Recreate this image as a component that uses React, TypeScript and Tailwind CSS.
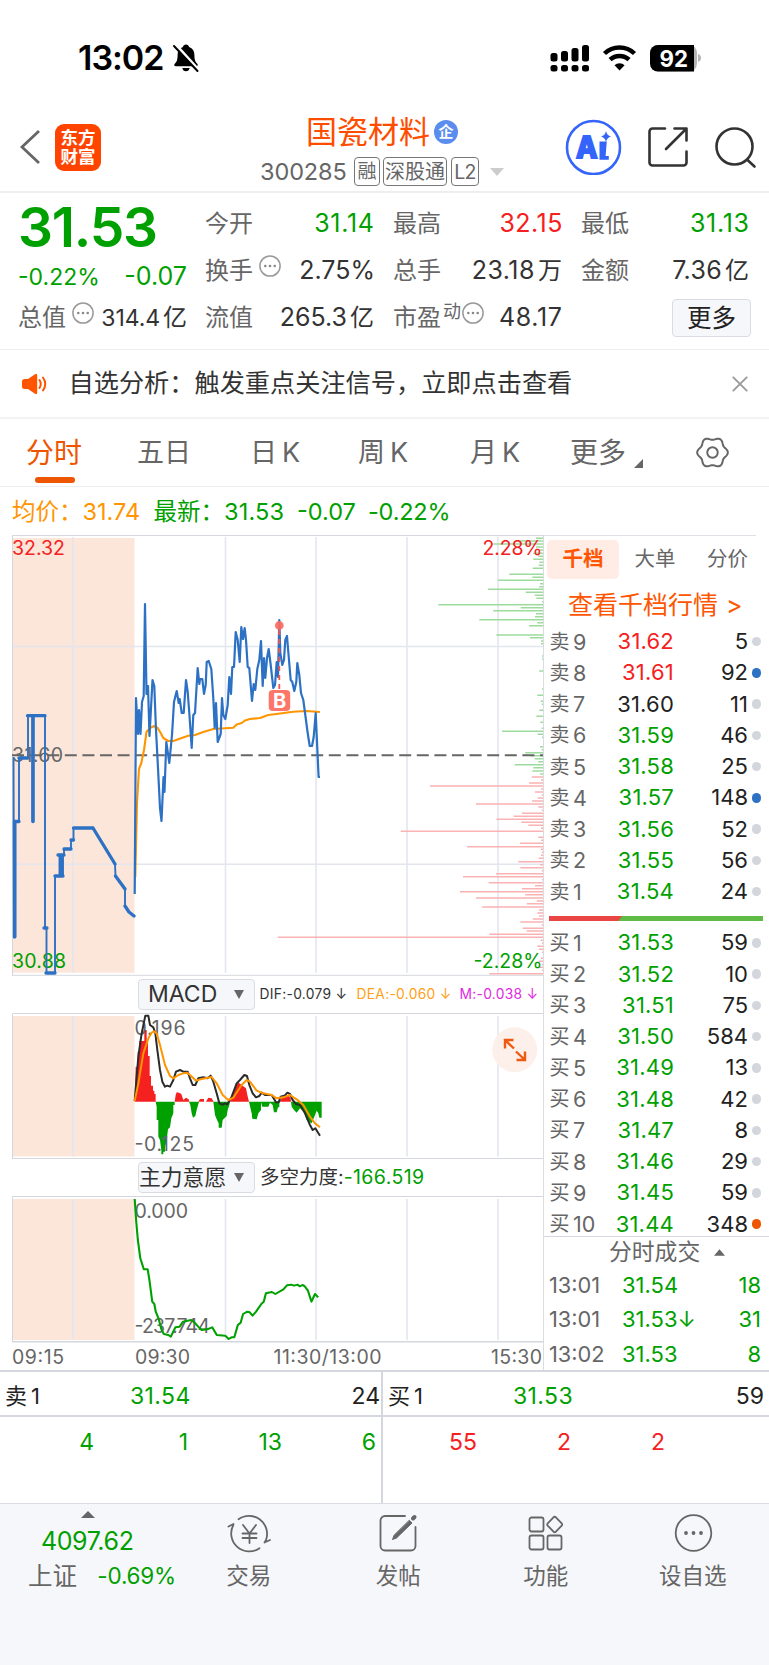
import React from "react";

const GREEN = "#00a000";
const RED = "#f52020";
const BLUE = "#2d71c4";
const GRID = "#e3e6ee";
const LINE = "#d4d7dd";

const auction =
  "13.5,757 14,937 15.5,937 15.5,821.5 19,821.5 19,758 28,758 28,716 32.3,716 32.3,821.5 33.5,821.5 33.5,716 45,716 45,928 46.5,928 46.5,973 55,973 55,876 59.5,876 59.5,855 61.5,855 61.5,876 63,876 63,855 64,855 64,849 71,849 71,840 73.5,840 73.5,828 93,828 115,864 115.5,876 125,889 125,906 129,912 134,916";

const price =
  "134.7,894 136,698 138,734 139,710 140.5,734 142,702 143.7,696 145,604 146.5,694 148,686 149.5,736 152.5,680 154.3,686 156,730 158,768 160,808 161.5,821 163.5,777 164.5,792 166.3,742 169.3,763 172,735 174,702 176.7,691 178.7,703 179.7,699 181.7,713 183.7,713 186,680 187.7,692 189.3,713 191.7,748 193.3,715 195,713 197.7,668 199.3,684 200,679 202.3,679 204,694 205.7,685 206.7,662 208.7,661 211.3,669 213.3,698 214.7,728 216,703 217.7,742 220.7,734 222,698 223.3,715 225.3,719 227.7,705 229.3,677 231,694 232.3,667 234,667 235.7,632 237.7,640 239.7,662 241.3,627 243,639 244.7,628 246,640 247.7,667 249.3,668 252,701 253.7,684 255.3,690 257.3,669 259.3,660 261,641 262.7,686 264,658 265.3,678 267,658 268.7,649 270.7,665 273.3,688 275,685 276.7,662 278,677 279.3,620 280.3,653 282.3,665 284,660 285.3,640 287,636 288.3,652 290.7,680 292.3,682 294.3,691 296.3,682 297.3,663 299.3,675 301,693 303.3,700 305.3,715 307.7,733 309.7,746 312,746 313.7,737 315.7,713 318.6,777 320,777";

const average =
  "135.3,877 137,803 139,769 141.3,763 144,750 146.5,732 150,728 154.3,726 157.7,728 160.7,733 163.3,738 168.3,741 173.3,741 181.7,738 188.3,735.7 195,735 203.3,732 213.3,729 233.3,727.7 236.7,724.5 241.7,723 245,720.5 250,719 260,718 268.3,715 278.3,713.7 293.3,711.7 306.7,711 320,712";

// Volume-by-price rows: [row, left edge] in thirds of a pixel from (260, 525).
const sellDepth: number[][] = [
  [40, 828], [48, 775], [57, 700], [66, 828], [75, 838], [85, 820], [94, 835], [103, 820], [112, 838], [121, 836],
  [130, 818], [148, 748], [157, 817], [166, 714], [176, 840], [185, 838], [193, 684], [202, 797], [211, 824],
  [220, 829], [230, 846], [239, 535], [248, 782], [257, 700], [266, 828], [275, 825], [284, 658], [293, 832],
  [302, 807], [330, 709], [338, 810], [348, 843], [356, 843], [393, 846], [402, 846], [438, 838], [492, 846],
  [511, 832], [529, 842], [538, 845], [556, 838], [574, 829], [592, 841], [610, 845], [619, 726], [628, 833],
  [637, 846], [665, 840], [674, 845], [683, 796], [692, 813], [701, 824], [710, 835], [719, 764], [728, 820],
  [738, 817], [747, 840],
];
const buyDepth: number[][] = [
  [756, 815], [765, 843], [774, 807], [783, 510], [792, 843], [801, 825], [810, 845], [819, 833], [828, 816],
  [837, 648], [846, 835], [856, 845], [865, 786], [874, 761], [883, 709], [892, 784], [901, 805], [910, 843],
  [919, 422], [937, 835], [946, 843], [955, 780], [965, 621], [973, 842], [982, 846], [991, 843], [1000, 836],
  [1010, 775], [1019, 840], [1028, 781], [1037, 845], [1046, 708], [1055, 609], [1064, 846], [1073, 686],
  [1082, 825], [1091, 786], [1100, 600], [1109, 796], [1119, 648], [1128, 830], [1136, 800], [1146, 667],
  [1155, 837], [1164, 832], [1173, 837], [1182, 818], [1191, 781], [1200, 845], [1210, 788], [1218, 800],
  [1228, 688], [1237, 53], [1246, 842], [1255, 846], [1264, 832], [1273, 837], [1282, 846], [1300, 843],
  [1309, 836], [1318, 845], [1327, 838], [1336, 846], [1346, 688],
];

function depthPath(rows: number[][]) {
  return rows.map(([y, x]) => `M${(260 + x / 3).toFixed(1)} ${(525 + y / 3).toFixed(1)}H543.3`).join("");
}

const dif =
  "404,393 415,260 425,190 436,137 445,137 450,165 460,172 466,190 472,240 480,300 487,335 495,350 502,347 510,350 520,330 528,305 540,300 550,305 563,305 570,325 578,345 586,345 595,325 610,322 622,325 632,317 640,335 650,370 658,400 668,404 675,400 682,403 695,380 710,340 720,330 733,315 741,318 748,345 758,370 768,382 778,378 785,368 795,375 815,375 828,397 836,397 842,380 855,376 862,368 870,372 878,390 888,402 900,405 915,430 930,465 938,480 946,475 960,497";
const dea =
  "404,393 415,340 430,250 445,205 455,188 462,184 470,190 480,225 495,285 510,318 520,325 535,315 550,310 562,308 570,315 588,332 605,327 635,321 650,340 668,375 685,390 700,383 725,345 740,330 750,335 770,362 790,370 815,375 830,385 850,382 870,375 890,388 910,405 930,440 945,460 960,472";
const histRed = [
  "404,395 407,290 413,290 413,245 418,245 418,213 433,213 433,180 440,180 440,215 444,215 444,258 449,258 449,318 453,318 453,347 459,347 459,362 463,362 463,372 467,372 467,395",
  "524,395 527,375 530,367 537,368 544,372 550,390 558,383 566,388 568,395",
  "595,395 600,387 612,387 612,395",
  "618,395 625,383 635,385 641,395",
  "690,395 700,370 712,335 725,345 738,355 742,375 747,395",
  "838,395 845,385 855,380 865,375 872,385 873,395",
];
const histGreen = [
  "467,395 470,410 470,450 475,450 475,500 480,510 484,540 484,553 490,553 490,545 495,545 495,530 500,512 504,478 510,472 514,445 520,430 520,405 524,405 524,395",
  "567,395 571,405 575,430 579,443 586,438 590,420 597,395",
  "640,395 645,435 651,450 656,460 656,473 665,473 668,450 680,438 683,420 688,405 690,395",
  "747,395 755,430 757,446 770,448 775,430 783,420 783,397 787,410 805,410 810,398 818,405 822,427 830,427 834,412 838,412 838,395",
  "873,395 875,410 882,420 890,428 900,415 912,425 920,450 935,460 943,440 950,422 955,430 958,443 965,443 965,395",
];
const strength =
  "384,117 388,180 393,240 400,295 410,328 421,328 426,360 434,425 440,432 444,455 452,475 460,508 467,522 480,525 487,530 494,515 500,502 512,500 522,485 545,480 555,488 565,500 575,510 590,508 605,502 618,525 642,527 652,537 660,532 668,532 678,495 686,488 693,462 705,455 712,457 720,467 730,455 745,432 752,425 758,400 775,396 785,402 808,388 818,376 830,374 838,377 848,374 855,379 862,375 868,378 878,392 888,425 898,402 907,412";

const gear =
  Array.from({ length: 72 }, (_, i) => {
    const a = (i * Math.PI) / 36;
    const r = 13.6 + 1.3 * Math.cos(6 * a);
    return `${i ? "L" : "M"}${(17 + r * Math.cos(a)).toFixed(2)} ${(17 + r * Math.sin(a)).toFixed(2)}`;
  }).join("") + "z";

function Label(p: { x: number; y: number; w: number; fill: string; children: React.ReactNode }) {
  return (
    <text x={p.x} y={p.y} fill={p.fill} fontSize={19.5} textLength={p.w}>
      {p.children}
    </text>
  );
}

function Verticals({ top, bottom }: { top: number; bottom: number }) {
  return (
    <path
      d={[73, 225.5, 316, 407, 498].map((x) => `M${x} ${top}V${bottom}`).join("")}
      stroke={GRID}
      strokeWidth="1.6"
      fill="none"
    />
  );
}

function More({ className }: { className?: string }) {
  return (
    <svg viewBox="0 0 24 24" className={`size-6 shrink-0 ${className ?? ""}`}>
      <circle cx="12" cy="12" r="10.1" fill="none" stroke="#999" strokeWidth="1.5" />
      <g fill="#888">
        <circle cx="7.3" cy="12" r="1.3" />
        <circle cx="12" cy="12" r="1.3" />
        <circle cx="16.7" cy="12" r="1.3" />
      </g>
    </svg>
  );
}

function StatusBar() {
  return (
    <div className="flex h-[98px] items-center pl-[78px] pt-[17px]">
      <span className="w-[88px] text-[34px] font-semibold tracking-[-1px] text-black">13:02</span>
      <svg viewBox="0 0 28 30" className="ml-[6px] h-[30px] w-[28px]">
        <path d="M14 1.5c1.6 0 2.8 1 3.1 2.4 3.6 1.3 5.3 4.3 5.3 8 0 5.5 1.3 7.3 2.9 8.9.9 1 .3 2.5-1 2.5H3.7c-1.3 0-1.9-1.500-1-2.500 1.600-1.600 2.900-3.400 2.900-8.900 0-3.700 1.700-6.700 5.300-8C11.200 2.500 12.400 1.500 14 1.500z" fill="#000" />
        <path d="M10.3 25h7.4c-.4 2-1.8 3.300-3.700 3.300s-3.300-1.300-3.700-3.300z" fill="#000" />
        <path d="M3.800 1.800 27 27.500" stroke="#fff" strokeWidth="3" />
        <path d="M2 3 25.500 28" stroke="#000" strokeWidth="2" strokeLinecap="round" />
      </svg>
      <svg viewBox="0 0 160 30" className="ml-[349px] h-[30px] w-[160px]">
        <g fill="#000">
          <rect x="1.5" y="10" width="7" height="8.5" rx="2.5" />
          <rect x="12" y="8" width="7" height="10.5" rx="2.5" />
          <rect x="22.5" y="5" width="7" height="13.5" rx="2.5" />
          <rect x="33" y="2" width="7" height="16.5" rx="2.5" />
          <rect x="1.5" y="22" width="7" height="6.5" rx="2.5" />
          <rect x="12" y="22" width="7" height="6.5" rx="2.5" />
          <rect x="22.5" y="22" width="7" height="6.5" rx="2.5" />
          <rect x="33" y="22" width="7" height="6.5" rx="2.5" />
        </g>
        <g fill="none" stroke="#000" strokeWidth="4.5">
          <path d="M55.500 10.500a21.500 21.500 0 0 1 30 0" />
          <path d="M61.100 16.700a13.700 13.700 0 0 1 18.900 0" />
        </g>
        <path d="M65.500 22.200a7.300 7.300 0 0 1 10.100 0l-5.050 5.300z" fill="#000" />
        <path d="M149 11c2 .6 3 2.200 3 4s-1 3.400-3 4z" fill="#b5b5b5" />
        <rect x="101" y="2" width="47" height="26.5" rx="8" fill="#b5b5b5" />
        <path d="M109 2h36v26.500h-36a8 8 0 0 1-8-8V10a8 8 0 0 1 8-8z" fill="#000" />
        <text x="110.500" y="23.500" fill="#fff" fontSize="23" fontWeight="700" textLength="28.500" lengthAdjust="spacingAndGlyphs">92</text>
      </svg>
    </div>
  );
}

function Header() {
  return (
    <header className="flex h-[95px] items-center border-b-2 border-[#eeeeee]">
      <svg viewBox="0 0 22 36" className="ml-[19px] mt-[5px] h-[36px] w-[22px]">
        <path d="M20 2 3 18l17 16" fill="none" stroke="#666" strokeWidth="2.8" />
      </svg>
      <div className="ml-[14px] mt-[5px] grid h-[47px] w-[46px] place-content-center rounded-[9px] bg-[#ff4400] text-center text-[17.5px] font-bold leading-[19px] text-white">
        <span>东方</span>
        <span>财富</span>
      </div>
      <div className="ml-[159px] w-[247px] pt-[12px]">
        <div className="flex h-[42px] items-center pl-[46px]">
          <span className="text-[31px] leading-[40px] text-[#ff4d00]">国瓷材料</span>
          <span className="ml-[4px] grid size-6 place-content-center rounded-full bg-[#5b8def] text-[15px] font-bold leading-[22px] text-white">企</span>
        </div>
        <div className="flex h-[38px] items-center text-[#666]">
          <span className="w-[94px] text-[23.5px] tracking-[-0.1px]">300285</span>
          <span className="grid h-[29px] w-[26px] place-content-center rounded-[4px] border border-[#777] text-[19px] leading-[26px]">融</span>
          <span className="ml-[3px] grid h-[29px] w-[64px] place-content-center rounded-[4px] border border-[#777] text-[20px] leading-[26px]">深股通</span>
          <span className="ml-[4px] grid h-[29px] w-[28px] place-content-center rounded-[4px] border border-[#777] text-[19.5px] tracking-[-0.8px] leading-[26px]">L2</span>
          <svg viewBox="0 0 14 8" className="ml-[11px] h-[8px] w-[14px]"><path d="M0 0h14L7 8z" fill="#ccc" /></svg>
        </div>
      </div>
      <svg viewBox="0 0 206 60" className="ml-[55px] h-[60px] w-[206px]">
        <circle cx="31.5" cy="32.5" r="26.500" fill="none" stroke="#3564fb" strokeWidth="2.6" />
        <text x="14" y="42.500" fill="#3564fb" stroke="#3564fb" strokeWidth="1.8" fontSize="30" fontWeight="800" textLength="21.500" lengthAdjust="spacingAndGlyphs">A</text>
        <path d="M37.500 26.500h7.300l-1.200 14.500h3.200v3.800h-9.300z" fill="#3564fb" />
        <path d="M44 16q.9 4.500 5 5.500-4.100 1-5 5.500-.9-4.500-5-5.500 4.100-1 5-5.500z" fill="#3564fb" />
        <g fill="none" stroke="#333" strokeWidth="2.6" strokeLinecap="round" strokeLinejoin="round">
          <path d="M103 13.500H90.500a3 3 0 0 0-3 3v31a3 3 0 0 0 3 3h31a3 3 0 0 0 3-3V36.500" />
          <path d="M112.500 13.500h12v12M124 14l-20 20" />
          <circle cx="172.500" cy="31.500" r="18" />
          <path d="m185.500 45 7 6.500" />
        </g>
      </svg>
    </header>
  );
}

const cell = "flex h-[47px] w-[169px] items-center justify-between";
const lab = "text-[24px] text-[#666]";
const unit = "ml-[3px] text-[24px] tracking-normal";

function Quote() {
  return (
    <section className="flex h-[157px] border-b border-[#eeeeee] pt-[7px] pl-[18px]">
      <div className="w-[187px]">
        <div className="h-[58px] text-[55px] font-semibold leading-[54px] tracking-[-1.2px] text-[#00a000]">31.53</div>
        <div className="flex h-[38px] w-[169px] items-center justify-between text-[#00a000]">
          <span className="text-[23px]">-0.22%</span>
          <span className="text-[25px]">-0.07</span>
        </div>
        <div className="flex h-[44px] w-[169px] items-center">
          <span className={lab}>总值</span>
          <More className="relative -top-[5px] ml-[5px]" />
          <span className="ml-auto text-[23px] tracking-[-0.1px] text-[#333]">314.4<span className={unit}>亿</span></span>
        </div>
      </div>
      <div className="w-[188px]">
        <div className={cell}><span className={lab}>今开</span><span className="-mr-[0.7px] text-[25px] tracking-[0.7px] text-[#00a000]">31.14</span></div>
        <div className={cell}><span className={lab}>换手</span><More className="relative -top-[5px] ml-[5px]" /><span className="ml-auto -mr-px text-[25px] text-[#333]">2.75%</span></div>
        <div className={cell}><span className={lab}>流值</span><span className="text-[25px] text-[#333]">265.3<span className={unit}>亿</span></span></div>
      </div>
      <div className="w-[188px]">
        <div className={cell}><span className={lab}>最高</span><span className="-mr-[1px] text-[25px] tracking-[0.5px] text-[#f52020]">32.15</span></div>
        <div className={cell}><span className={lab}>总手</span><span className="text-[25px] tracking-[0.5px] text-[#333]">23.18<span className={unit}>万</span></span></div>
        <div className={cell}><span className={lab}>市盈</span><span className="ml-[2px] self-start pt-[4px] text-[18px] text-[#666]">动</span><More className="relative -top-[5px]" /><span className="ml-auto -mr-[0.5px] text-[25px] tracking-[0.6px] text-[#333]">48.17</span></div>
      </div>
      <div className="w-[170px]">
        <div className="flex h-[47px] w-[168px] items-center justify-between"><span className={lab}>最低</span><span className="-mr-[0.7px] text-[25px] tracking-[0.7px] text-[#00a000]">31.13</span></div>
        <div className="flex h-[47px] w-[168px] items-center justify-between"><span className={lab}>金额</span><span className="text-[25px] tracking-[0.3px] text-[#333]">7.36<span className={unit}>亿</span></span></div>
        <div className="flex h-[47px] items-center justify-end">
          <span className="grid h-[38px] w-[79px] place-content-center rounded-[4px] border border-[#d9dce3] bg-[#f6f7fa] text-[24.5px] leading-[32px] text-[#222]">更多</span>
        </div>
      </div>
    </section>
  );
}

function Banner() {
  return (
    <div className="flex h-[69px] items-center border-b-2 border-[#f3f3f3] pl-[21px]">
      <svg viewBox="0 0 28 24" className="h-[24px] w-[28px]">
        <path d="M1 9.500Q1 7 3.500 7H7l7-4.800c1-.7 2.200-.2 2.200 1v17.600c0 1.200-1.200 1.700-2.200 1L7 17H3.500Q1 17 1 14.500z" fill="#ff5500" />
        <path d="M18.500 8q2.500 4 0 8M22 5.500q4.500 6.500 0 13" fill="none" stroke="#ff5500" strokeWidth="2" strokeLinecap="round" />
      </svg>
      <span className="ml-[19.5px] w-[504px] text-[25.2px] text-[#333]">自选分析：触发重点关注信号，立即点击查看</span>
      <svg viewBox="0 0 16 16" className="ml-[159px] size-[16px]"><path d="m.8.8 14.400 14.400M15.200.8.800 15.200" stroke="#999" strokeWidth="1.8" /></svg>
    </div>
  );
}

function Tabs() {
  return (
    <nav className="flex h-[68px] items-center border-b border-[#eeeeee] pt-px text-[27px] text-[#666]">
      <span className="relative ml-[26px] w-[111px] text-[28px] text-[#ee5500]">
        分时
        <i className="absolute left-[9px] -bottom-[9px] h-[6px] w-[40px] rounded-full bg-[#ee5500]" />
      </span>
      <span className="w-[113px]">五日</span>
      <span className="w-[108px]">日<span className="ml-[5px]">K</span></span>
      <span className="w-[112px]">周<span className="ml-[5px]">K</span></span>
      <span className="w-[100px]">月<span className="ml-[5px]">K</span></span>
      <span className="w-[64px] text-[28px]">更多</span>
      <svg viewBox="0 0 9 9" className="mt-[20px] size-[9px]"><path d="M9 0v9H0z" fill="#666" /></svg>
      <svg viewBox="0 0 34 34" className="-mt-[2px] ml-[52px] size-[35px]">
        <path d={gear} fill="none" stroke="#666" strokeWidth="1.9" />
        <circle cx="17" cy="17" r="5.1" fill="none" stroke="#666" strokeWidth="1.9" />
      </svg>
    </nav>
  );
}

function Summary() {
  return (
    <div className="flex h-[48px] items-center pl-[12px] pt-[1px] text-[23.5px] text-[#00a000]">
      <span className="w-[70.5px] text-[#ff9500]">均价：</span>
      <span className="w-[71px] text-[#ff9500]">31.74</span>
      <span className="w-[70.5px]">最新：</span>
      <span className="w-[73px] tracking-[0.2px]">31.53</span>
      <span className="w-[71px]">-0.07</span>
      <span className="tracking-[-0.2px]">-0.22%</span>
    </div>
  );
}

function PriceChart() {
  return (
    <svg viewBox="0 535 543 441" className="block h-[441px] w-[543px]">
      <rect x="12" y="538" width="122.5" height="434.7" fill="#fce5d9" />
      <Verticals top={537} bottom={972.7} />
      <path d="M12 646.500H543M12 864.300H543" stroke={GRID} strokeWidth="1.6" />
      <path d="M12.500 976V535.500H543M12 975.300H543" fill="none" stroke={LINE} />
      <path d={depthPath(sellDepth)} stroke="#9ddb9d" strokeWidth="1.4" />
      <path d={depthPath(buyDepth)} stroke="#fbb2b2" strokeWidth="1.4" />
      <path d="M12 755.300H543" stroke="#666" strokeWidth="2" strokeDasharray="12 5.6" />
      <Label x={12} y={554.5} w={53} fill={RED}>32.32</Label>
      <Label x={482.5} y={554.5} w={60} fill={RED}>2.28%</Label>
      <Label x={12} y={761.5} w={51} fill="#666">31.60</Label>
      <Label x={12} y={968} w={54} fill={GREEN}>30.88</Label>
      <Label x={473.5} y={968} w={69} fill={GREEN}>-2.28%</Label>
      <polyline points={average} fill="none" stroke="#ff9500" strokeWidth="2.1" strokeLinejoin="round" />
      <polyline points={auction} fill="none" stroke={BLUE} strokeWidth="1.9" strokeLinejoin="round" />
      <path
        d="M14.500 821.500V937M15 821.500H19M19 758H28M27.500 715.700H45M33 716V821.500M44 928h3M46 973h9M55 876h8M58 855h6M60.800 855V876M64 849h7M71 840h2.500M73.500 828H93M93 828 115 864M115.500 876 125 889M125 906 129 912 134 916"
        fill="none"
        stroke={BLUE}
        strokeWidth="3.3"
        strokeLinecap="round"
        strokeLinejoin="round"
      />
      <polyline points={price} fill="none" stroke={BLUE} strokeWidth="2.2" strokeLinejoin="round" />
      <path d="M279.300 630V690" stroke="#f5554a" strokeWidth="1.8" strokeDasharray="5 4" />
      <circle cx="279.3" cy="625.5" r="4.4" fill="#fb6a5e" fillOpacity=".92" />
      <rect x="268.7" y="690" width="21.5" height="21" rx="4" fill="#fc7769" />
      <text x="279.5" y="707.5" fill="#fff" fontSize="20" fontWeight="700" textAnchor="middle">B</text>
    </svg>
  );
}

function Picker({ children, className }: { children: React.ReactNode; className: string }) {
  return (
    <div className={`flex h-[31px] w-[117px] shrink-0 items-center justify-between rounded-[4px] border border-[#d9dce3] bg-[#f6f7fa] pr-[10px] text-[#333] ${className}`}>
      <span>{children}</span>
      <svg viewBox="0 0 10 9" className="h-[9px] w-[10px]"><path d="M0 0h10L5 9z" fill="#666" /></svg>
    </div>
  );
}

function MacdChart() {
  return (
    <svg viewBox="0 1012 543 147" className="block h-[147px] w-[543px]">
      <rect x="12" y="1016" width="122.5" height="140.5" fill="#fce5d9" />
      <Verticals top={1016} bottom={1156.5} />
      <path d="M12.500 1159V1013.500H543M12 1158.500H543" fill="none" stroke={LINE} />
      <g transform="translate(0 970) scale(.33333)">
        {histRed.map((p) => <polygon key={p} points={p} fill={RED} />)}
        {histGreen.map((p) => <polygon key={p} points={p} fill={GREEN} />)}
      </g>
      <Label x={134.5} y={1035} w={51} fill="#666">0.196</Label>
      <Label x={134.5} y={1150.5} w={59.5} fill="#666">-0.125</Label>
      <g transform="translate(0 970) scale(.33333)" fill="none" strokeWidth="6" strokeLinejoin="round">
        <polyline points={dif} stroke="#2b2b2b" />
        <polyline points={dea} stroke="#ff9500" />
      </g>
      <circle cx="514.7" cy="1049.7" r="22.5" fill="#fdefe8" fillOpacity=".92" />
      <path d="M505 1048.500V1040h8.500M505.500 1040.500l8.500 8M525 1051.500V1060h-8.500M524.500 1059.500l-8.500-8" fill="none" stroke="#f05a10" strokeWidth="2.4" />
    </svg>
  );
}

function StrengthChart() {
  return (
    <svg viewBox="0 1195 543 176" className="block h-[176px] w-[543px]">
      <rect x="12" y="1199" width="122.5" height="141" fill="#fce5d9" />
      <Verticals top={1199} bottom={1340} />
      <path d="M12.500 1342V1196.500H543" fill="none" stroke={LINE} />
      <path d="M12 1341.700H543" stroke={LINE} strokeWidth="1.4" />
      <Label x={134.5} y={1218} w={53.5} fill="#666">0.000</Label>
      <Label x={134.5} y={1332.5} w={75.5} fill="#666">-237.744</Label>
      <g transform="translate(0 1160) scale(.35077 .33333)">
        <polyline points={strength} fill="none" stroke={GREEN} strokeWidth="6" strokeLinejoin="round" />
      </g>
      <Label x={12} y={1364} w={52} fill="#666">09:15</Label>
      <Label x={135} y={1364} w={55} fill="#666">09:30</Label>
      <Label x={273.5} y={1364} w={108} fill="#666">11:30/13:00</Label>
      <Label x={491} y={1364} w={51} fill="#666">15:30</Label>
    </svg>
  );
}

type Row = [string, string, string, string?];
const asks: Row[] = [
  ["9", "31.62", "5"], ["8", "31.61", "92", "b"], ["7", "31.60", "11"], ["6", "31.59", "46"], ["5", "31.58", "25"],
  ["4", "31.57", "148", "b"], ["3", "31.56", "52"], ["2", "31.55", "56"], ["1", "31.54", "24"],
];
const bids: Row[] = [
  ["1", "31.53", "59"], ["2", "31.52", "10"], ["3", "31.51", "75"], ["4", "31.50", "584"], ["5", "31.49", "13"],
  ["6", "31.48", "42"], ["7", "31.47", "8"], ["8", "31.46", "29"], ["9", "31.45", "59"], ["10", "31.44", "348", "o"],
];

function BookRow({ side, row: [n, p, q, dot] }: { side: string; row: Row }) {
  const tone = p > "31.60" ? "text-[#f52020]" : p === "31.60" ? "text-[#222]" : "text-[#00a000]";
  const fill = dot === "b" ? "bg-[#2d71c4]" : dot === "o" ? "bg-[#ee5500]" : "bg-[#d3d6dc]";
  return (
    <div className="flex h-[31.250px] items-center text-[22px]">
      <span className="ml-[5.5px] w-[23.5px] text-[20px] text-[#666]">{side}</span>
      <span className="w-[40px] text-[21.5px] text-[#666]">{n}</span>
      <span className={`w-[61px] text-right tracking-[0.2px] ${tone}`}>{p}</span>
      <span className="w-[74px] text-right text-[#222]">{q}</span>
      <i className={`ml-[3.5px] size-[9.5px] rounded-full ${fill}`} />
    </div>
  );
}

function Book() {
  return (
    <aside className="h-[836px] w-[226px] shrink-0 border-l border-[#d9dce3]">
      <div className="mr-[13px] h-px bg-[#dfe1e6]" />
      <div className="ml-[3px] mt-[4px] flex h-[39px] text-center text-[20.5px] leading-[38px] text-[#666]">
        <span className="w-[72px] rounded-[5px] bg-[#ffece4] font-bold text-[#ff5500]">千档</span>
        <span className="w-[72px]">大单</span>
        <span className="w-[73px]">分价</span>
      </div>
      <div className="flex h-[47px] items-center pl-[24px] pt-[6px] text-[25px] text-[#ff5500]">
        查看千档行情<span className="ml-[8px]">&gt;</span>
      </div>
      {asks.map((r) => <BookRow key={r[0]} side="卖" row={r} />)}
      <div className="ml-[5px] mt-[9px] mb-[6px] flex h-[5px] w-[214px] bg-[#5fba46]">
        <svg viewBox="0 0 73 5" className="h-[5px] w-[73px]"><path d="M0 0h73l-4 5H0z" fill="#ea4545" /></svg>
      </div>
      {bids.map((r) => <BookRow key={r[0]} side="买" row={r} />)}
      <div className="-mt-[4px] flex h-[32px] items-center border-t border-[#d4d7dd] pl-[65px] text-[22.8px] text-[#666]">
        分时成交
        <svg viewBox="0 0 12 7" className="ml-[14px] h-[7px] w-[11px]"><path d="M0 7h12L6 0z" fill="#666" /></svg>
      </div>
      {[["13:01", "31.54", "18"], ["13:01", "31.53↓", "31"], ["13:02", "31.53", "8"]].map(([t, p, q], i) => (
        <div key={i} className="flex h-[34.5px] items-center text-[22px] text-[#00a000]">
          <span className="ml-[5px] w-[73px] text-[21.8px] text-[#666]">{t}</span>
          <span className="w-[80px]">{p}</span>
          <span className="w-[59px] text-right">{q}</span>
        </div>
      ))}
    </aside>
  );
}

type LevelProps = { side: string; price: string; qty: string; items: string[]; tone: string; className: string; row: string };

function Level({ side, price: p, qty, items, tone, className, row }: LevelProps) {
  return (
    <div className={className}>
      <div className={`flex h-[45px] items-center border-b-2 border-[#d4d7dd] pt-[5px] pl-[5px] text-[23px] text-[#222] ${row}`}>
        <span className="w-[125px] text-[22px]">{side}<span className="ml-[4px]">1</span></span>
        <span className="tracking-[0.4px] text-[#00a000]">{p}</span>
        <span className="ml-auto">{qty}</span>
      </div>
      <div className={`grid h-[50px] grid-cols-[94px_94px_94px_94px] items-center text-right text-[23px] ${tone}`}>
        {items.map((v, i) => <span key={i}>{v}</span>)}
      </div>
    </div>
  );
}

function Levels() {
  return (
    <section className="flex h-[133px] border-t-2 border-[#d4d7dd]">
      <Level side="卖" price="31.54" qty="24" items={["4", "1", "13", "6"]} tone="text-[#00a000]" className="w-[383px] border-r-2 border-[#d4d7dd]" row="pr-[1px]" />
      <Level side="买" price="31.53" qty="59" items={["55", "2", "2"]} tone="text-[#f52020]" className="w-[386px]" row="pr-[5px]" />
    </section>
  );
}

function NavItem({ label, children, className }: { label: string; children: React.ReactNode; className: string }) {
  return (
    <div className={`flex flex-col items-center ${className}`}>
      <svg viewBox="0 0 44 44" className="size-[44px]" fill="none" stroke="#666" strokeWidth="1.8" strokeLinecap="round" strokeLinejoin="round">
        {children}
      </svg>
      <span className="mt-[5px] text-[22.5px] leading-[32px]">{label}</span>
    </div>
  );
}

function BottomNav() {
  return (
    <footer className="flex h-[163px] border-t border-[#d9dce3] bg-[#f6f7fa] pt-[7px] text-[#666]">
      <div className="w-[176px]">
        <svg viewBox="0 0 14 7" className="ml-[81px] block h-[7px] w-[14px]"><path d="M0 7h14L7 0z" fill="#666" /></svg>
        <div className="ml-[41px] mt-[6px] h-[34px] text-[25px] leading-[34px] tracking-[-0.4px] text-[#00a000]">4097.62</div>
        <div className="ml-[28px] flex h-[36px] items-center text-[24.5px]">
          <span className="w-[70px]">上证</span>
          <span className="text-[22.5px] tracking-[-0.2px] text-[#00a000]">-0.69%</span>
        </div>
      </div>
      <NavItem label="交易" className="w-[146px]">
        <path d="M11.500 8.300A18 18 0 0 1 39 29M32.500 37.200A18 18 0 0 1 6.300 14M1.500 15.500l5-2.500M37.500 31.500l5.500-2.500M39 29l-1.500 2.500" />
        <path d="m16 14 6.500 8.500L29 14M22.500 22.500V32M15.500 22.500h14M15.500 27h14" />
      </NavItem>
      <NavItem label="发帖" className="w-[154px]">
        <path d="M29 5H9a4.500 4.500 0 0 0-4.500 4.500v25.500A4.500 4.500 0 0 0 9 39.500h26a4.500 4.500 0 0 0 4.500-4.500V16" />
        <path d="M33.500 9.500 36 12 20.500 27 16.500 28.500 18 24.500z" fill="#666" strokeWidth="1" />
        <path d="m37 7.500 1.500-1.500" strokeWidth="4" />
      </NavItem>
      <NavItem label="功能" className="w-[142px]">
        <rect x="5.5" y="6.5" width="14" height="14" rx="2" />
        <rect x="5.5" y="24.5" width="14" height="14" rx="2" />
        <rect x="23.5" y="24.5" width="14" height="14" rx="2" />
        <path d="M29.500 6.300q1.200-1 2.400 0l5.800 6q1 1.200 0 2.400l-5.800 6q-1.200 1-2.400 0l-5.800-6q-1-1.200 0-2.400z" />
      </NavItem>
      <NavItem label="设自选" className="w-[153px]">
        <circle cx="22.5" cy="22" r="17.8" />
        <g fill="#666" stroke="none"><circle cx="15" cy="22" r="1.9" /><circle cx="22.5" cy="22" r="1.9" /><circle cx="30" cy="22" r="1.9" /></g>
      </NavItem>
    </footer>
  );
}

export default function App() {
  return (
    <div className="h-[1665px] w-[769px] overflow-hidden whitespace-nowrap bg-white font-['Inter','Noto_Sans_CJK_SC',sans-serif]">
      <StatusBar />
      <Header />
      <Quote />
      <Banner />
      <Tabs />
      <Summary />
      <div className="flex h-[835px] overflow-hidden">
        <div className="w-[543px] shrink-0">
          <PriceChart />
          <div className="flex h-[36px] items-center pt-px pl-[138px] text-[13.8px] tracking-[0.3px]">
            <Picker className="pl-[9px] text-[23px] tracking-normal">MACD</Picker>
            <span className="ml-[4.5px] w-[97px] text-[#333]">DIF:-0.079 ↓</span>
            <span className="w-[103px] text-[#ff9f1a]">DEA:-0.060 ↓</span>
            <span className="text-[#e02be0]">M:-0.038 ↓</span>
          </div>
          <MacdChart />
          <div className="flex h-[36px] items-center pt-px pl-[138px] text-[19.5px] text-[#333]">
            <Picker className="text-[21.8px]">主力意愿</Picker>
            <span className="ml-[5px]">多空力度:<span className="tracking-[0.4px] text-[#00a000]">-166.519</span></span>
          </div>
          <StrengthChart />
        </div>
        <Book />
      </div>
      <Levels />
      <BottomNav />
    </div>
  );
}
